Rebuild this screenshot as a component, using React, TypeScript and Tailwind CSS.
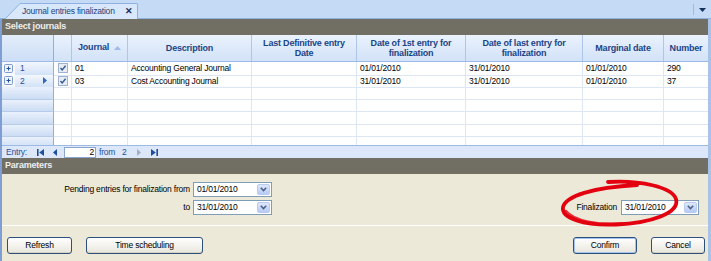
import React from 'react';

type RowData = {
  n: string;
  code: string;
  desc: string;
  first: string;
  last: string;
  marg: string;
  num: string;
  current?: boolean;
};

const rows: RowData[] = [
  { n: '1', code: '01', desc: 'Accounting General Journal', first: '01/01/2010', last: '31/01/2010', marg: '01/01/2010', num: '290' },
  { n: '2', code: '03', desc: 'Cost Accounting Journal', first: '31/01/2010', last: '31/01/2010', marg: '01/01/2010', num: '37', current: true },
];

const cols = 'grid grid-cols-[52px_18px_56px_124px_105px_109px_117px_81px_1fr]';
const cell = 'border-r border-b border-[#dce6f5] px-[3px] leading-[12px] whitespace-nowrap overflow-hidden';

const PlusBox = () => (
  <svg width="9" height="9" viewBox="0 0 9 9">
    <rect x="0.5" y="0.5" width="8" height="8" rx="1" fill="#eef3fb" stroke="#7f9ccb" />
    <path d="M2.5 4.5 H6.5 M4.5 2.5 V6.5" stroke="#1f4f9c" strokeWidth="1" />
  </svg>
);

const Check = () => (
  <svg width="10" height="10" viewBox="0 0 10 10">
    <rect x="0.5" y="0.5" width="9" height="9" fill="#e7ecf4" stroke="#9fb2d1" />
    <path d="M2.5 5 L4.2 7 L7.6 2.8" stroke="#355a92" strokeWidth="1.4" fill="none" />
  </svg>
);

const Chevron = () => (
  <svg width="7" height="5" viewBox="0 0 7 5">
    <path d="M0.8 0.8 L3.5 3.6 L6.2 0.8" stroke="#4a5f86" strokeWidth="1.5" fill="none" />
  </svg>
);

function DateBox({ value, w = 'w-[79px]' }: { value: string; w?: string }) {
  return (
    <div className={`flex h-[15px] ${w} border border-[#7f9db9] bg-white`}>
      <span className="flex-1 pl-[3px] leading-[13px]">{value}</span>
      <span className="w-[13px] my-[1px] mr-[1px] flex items-center justify-center rounded-[2px] border border-[#b9cbef] bg-gradient-to-b from-[#dfe8fc] to-[#b7caf3]">
        <Chevron />
      </span>
    </div>
  );
}

function Selector({ r }: { r?: RowData }) {
  if (!r) {
    return <div className="border-r border-b border-r-[#8fb0dd] border-b-[#b7cbea] bg-gradient-to-b from-[#eaf1fc] to-[#cbdcf4]" />;
  }
  return (
    <div className="flex border-r border-b border-r-[#8fb0dd] border-b-[#c7d7ef]">
      <div className="w-[13px] flex items-center justify-center bg-[#f5f8fd]">
        <PlusBox />
      </div>
      <div className="flex-1 flex items-center pl-[5px] pr-[6px] text-[#1f4f9c] bg-gradient-to-b from-[#f3f7fd] to-[#d3e2f7]">
        <span>{r.n}</span>
        {r.current && (
          <svg className="ml-auto" width="4" height="7" viewBox="0 0 4 7">
            <path d="M0 0 L4 3.5 L0 7Z" fill="#2f67c0" />
          </svg>
        )}
      </div>
    </div>
  );
}

function Row({ r }: { r?: RowData }) {
  return (
    <div className={`${cols} h-[12.5px] shrink-0`}>
      <Selector r={r} />
      <div className="border-r border-b border-[#dce6f5] flex items-center justify-center">{r && <Check />}</div>
      <div className={cell}>{r?.code}</div>
      <div className={cell}>{r?.desc}</div>
      <div className={cell}></div>
      <div className={cell}>{r?.first}</div>
      <div className={cell}>{r?.last}</div>
      <div className={cell}>{r?.marg}</div>
      <div className={`${cell} border-r-0`}>{r?.num}</div>
    </div>
  );
}

const Head = ({ children, last }: { children: React.ReactNode; last?: boolean }) => (
  <div
    className={`flex items-center justify-center text-center font-bold text-[9px] leading-[10px] text-[#1b4487] ${
      last ? '' : 'border-r border-[#aec6ea]'
    }`}
  >
    {children}
  </div>
);

const XpButton = ({ label, w, primary }: { label: string; w: string; primary?: boolean }) => (
  <button
    className={`${w} h-[17px] rounded-[3px] border border-[#2c4f7c] bg-gradient-to-b from-white to-[#e8e6dc] text-black text-[8.5px] leading-[15px] ${
      primary ? 'shadow-[inset_0_0_0_1px_#a6c2ee]' : 'shadow-[inset_0_-1px_0_#d6d0c0]'
    }`}
  >
    {label}
  </button>
);

export default function App() {
  return (
    <div className="relative w-[711px] h-[261px] overflow-hidden flex flex-col bg-[#ece9d8] text-black text-[8.5px] tracking-[-0.2px] font-['Liberation_Sans',Arial,sans-serif]">
      {/* tab strip */}
      <div className="h-[19px] shrink-0 flex items-end pl-[5px] bg-[#c5daf4] border-b border-[#8fb2e2]">
        <svg width="17" height="16" viewBox="0 0 17 16" className="-mb-px">
          <path d="M0 16 L15 0.5 H17 V16 Z" fill="#d9e7fa" />
          <path d="M0 16 L15 0.5 H17" stroke="#8db1e3" fill="none" />
        </svg>
        <div className="-mb-px h-[16px] flex items-center pr-[4px] bg-[#d9e7fa] border-t border-r border-[#8db1e3] rounded-tr-[2px]">
          <span className="text-[#1c3f7e]">Journal entries finalization</span>
          <span className="ml-[10px] text-[#1a2f5a] font-bold text-[9px] leading-none">✕</span>
        </div>
        <div className="ml-auto mb-[3px] flex items-center h-[11px]">
          <span className="w-px h-[11px] bg-[#9ab9e4]" />
          <svg className="ml-[5px] mr-[5px]" width="7" height="4" viewBox="0 0 7 4">
            <path d="M0 0 H7 L3.5 4Z" fill="#15325f" />
          </svg>
        </div>
      </div>

      <div className="flex-1 flex flex-col border-l-2 border-r-[3px] border-l-[#7f9ed3] border-r-[#a9c2e8] min-h-0">
        <div className="h-[16px] shrink-0 flex items-center pl-[3px] bg-[#716e63] text-[#efefef] font-bold text-[9px]">
          Select journals
        </div>

        {/* grid */}
        <div className={`${cols} h-[27px] shrink-0 bg-gradient-to-b from-[#eaf2fd] to-[#d2e2f8] border-b border-[#9cbae6]`}>
          <div className="border-r border-[#8fb0dd] bg-gradient-to-b from-[#e3edfa] to-[#cddef6]" />
          <Head>{''}</Head>
          <div className="flex items-center pl-[6px] pr-[6px] font-bold text-[9px] text-[#1b4487] border-r border-[#aec6ea]">
            <span>Journal</span>
            <svg className="ml-auto" width="7" height="4" viewBox="0 0 7 4">
              <path d="M0 4 L3.5 0 L7 4Z" fill="#9dbbe6" />
            </svg>
          </div>
          <Head>Description</Head>
          <Head>
            Last Definitive entry
            <br />
            Date
          </Head>
          <Head>
            Date of 1st entry for
            <br />
            finalization
          </Head>
          <Head>
            Date of last entry for
            <br />
            finalization
          </Head>
          <Head>Marginal date</Head>
          <Head last>Number</Head>
        </div>
        <div className="flex-1 min-h-0 overflow-hidden flex flex-col bg-white">
          {rows.map((r) => (
            <Row key={r.n} r={r} />
          ))}
          {[0, 1, 2, 3, 4].map((i) => (
            <Row key={'e' + i} />
          ))}
        </div>

        {/* navigator */}
        <div className="h-[13px] shrink-0 flex items-center pl-[4px] bg-[#dce8f9] border-t border-[#9cbae6] text-[#1f4f9c]">
          <span className="w-[31px]">Entry:</span>
          <svg width="7" height="7" viewBox="0 0 7 7">
            <rect x="0" y="0" width="1.6" height="7" fill="#1f4f9c" />
            <path d="M7 0 L2.2 3.5 L7 7Z" fill="#1f4f9c" />
          </svg>
          <svg className="ml-[9px]" width="4" height="7" viewBox="0 0 4 7">
            <path d="M4 0 L0 3.5 L4 7Z" fill="#1f4f9c" />
          </svg>
          <span className="ml-[7px] w-[32px] h-[11px] bg-white border border-[#8aa6cf] text-black text-right pr-[1px] leading-[9px]">2</span>
          <span className="ml-[3px] w-[23px]">from</span>
          <span className="w-[15px]">2</span>
          <svg width="4" height="7" viewBox="0 0 4 7">
            <path d="M0 0 L4 3.5 L0 7Z" fill="#9fb0cc" />
          </svg>
          <svg className="ml-[10px]" width="7" height="7" viewBox="0 0 7 7">
            <path d="M0 0 L4.8 3.5 L0 7Z" fill="#1f4f9c" />
            <rect x="5.4" y="0" width="1.6" height="7" fill="#1f4f9c" />
          </svg>
        </div>

        <div className="h-[16px] shrink-0 flex items-center pl-[3px] bg-[#716e63] text-[#efefef] font-bold text-[9px]">
          Parameters
        </div>

        {/* parameters */}
        <div className="h-[52px] shrink-0 flex items-start pt-[8px] pr-[9px] border-b border-white">
          <div className="grid grid-cols-[188px_79px] gap-x-[3px] gap-y-[3px] items-center">
            <span className="text-right">Pending entries for finalization from</span>
            <DateBox value="01/01/2010" />
            <span className="text-right">to</span>
            <DateBox value="31/01/2010" />
          </div>
          <div className="ml-auto mt-[18px] flex items-center gap-[4px]">
            <span>Finalization</span>
            <DateBox value="31/01/2010" w="w-[78px]" />
          </div>
        </div>

        {/* buttons */}
        <div className="h-[35px] shrink-0 flex items-start pt-[11px] pl-[5px] pr-[3px]">
          <XpButton label="Refresh" w="w-[65px]" />
          <span className="ml-[14px]">
            <XpButton label="Time scheduling" w="w-[117px]" />
          </span>
          <span className="ml-auto">
            <XpButton label="Confirm" w="w-[64px]" primary />
          </span>
          <span className="ml-[14px]">
            <XpButton label="Cancel" w="w-[54px]" />
          </span>
        </div>
      </div>

      {/* red annotation */}
      <svg className="absolute left-[550px] top-[175px] pointer-events-none" width="140" height="60" viewBox="550 175 140 60">
        <path
          d="M 608 182 C 640 180, 672 187, 676 199 C 680 213, 651 223, 616 224.5 C 584 226, 561 218, 563 207 C 566 196, 592 187.5, 637 185"
          stroke="#e3000f"
          strokeWidth="3.8"
          strokeLinecap="round"
          fill="none"
        />
        <path
          d="M 566 211 C 574 221, 598 225, 622 223.5"
          stroke="#e3000f"
          strokeWidth="2.4"
          strokeLinecap="round"
          fill="none"
          opacity="0.8"
        />
      </svg>
    </div>
  );
}
